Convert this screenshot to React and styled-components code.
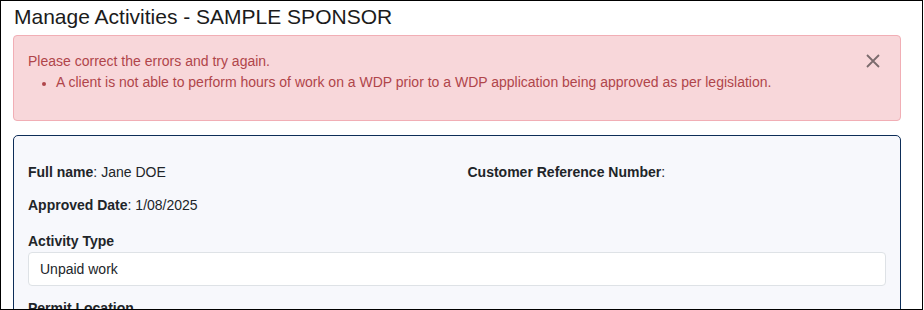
import React from "react";
import styled, { createGlobalStyle } from "styled-components";

const Global = createGlobalStyle`
  html, body { margin: 0; padding: 0; background: #fff; }
  body { font-family: "Liberation Sans", Arial, sans-serif; color: #212529; }
  * { box-sizing: border-box; }
`;

const Frame = styled.div`
  width: 923px;
  height: 310px;
  border: 1px solid #000;
  overflow: hidden;
  padding: 0 21px 0 12px;
  display: flex;
  flex-direction: column;
`;

const Title = styled.h1`
  margin: 3px 0 0 1px;
  font-size: 21px;
  font-weight: 400;
  line-height: 26px;
  color: #1b1b1b;
`;

const Alert = styled.div`
  margin-top: 5px;
  position: relative;
  background: #f8d7da;
  border: 1px solid #f1aeb5;
  border-radius: 4px;
  padding: 15px 14px 27px 14px;
  color: #b0454a;
  font-size: 14px;
  line-height: 21px;
`;

const AlertList = styled.ul`
  margin: 0;
  padding-left: 28px;
  li::marker { font-size: 12px; }
`;

const Close = styled.button`
  position: absolute;
  top: 17px;
  right: 19px;
  width: 16px;
  height: 16px;
  padding: 0;
  border: 0;
  background: transparent;
  cursor: pointer;
  display: flex;
  align-items: center;
  justify-content: center;
`;

const Card = styled.section`
  margin-top: 14px;
  background: #f7f8fc;
  border: 1px solid #0d2d58;
  border-radius: 5px;
  padding: 26px 14px 20px 14px;
  flex: 1;
`;

const InfoGrid = styled.div`
  display: grid;
  grid-template-columns: 1fr 1fr;
  column-gap: 21px;
  row-gap: 13px;
  font-size: 14px;
  line-height: 20px;
  color: #212529;
`;

const Field = styled.div`
  b { font-weight: 700; }
`;

const Label = styled.div`
  margin-top: ${(p) => p.$gap || 16}px;
  font-size: 14px;
  font-weight: 700;
  line-height: 20px;
`;

const Input = styled.div`
  margin-top: 1px;
  height: 34px;
  background: #fff;
  border: 1px solid #dee2e6;
  border-radius: 4px;
  padding: 0 11px;
  display: flex;
  align-items: center;
  font-size: 14px;
  color: #212529;
`;

export default function App() {
  return (
    <>
      <Global />
      <Frame>
        <Title>Manage Activities - SAMPLE SPONSOR</Title>
        <Alert role="alert">
          <div>Please correct the errors and try again.</div>
          <AlertList>
            <li>
              A client is not able to perform hours of work on a WDP prior to a WDP application being approved as per legislation.
            </li>
          </AlertList>
          <Close aria-label="Close">
            <svg width="14" height="14" viewBox="0 0 14 14">
              <path d="M1 1L13 13M13 1L1 13" stroke="#7b6b6d" strokeWidth="1.8" />
            </svg>
          </Close>
        </Alert>
        <Card>
          <InfoGrid>
            <Field><b>Full name</b>: Jane DOE</Field>
            <Field><b>Customer Reference Number</b>:</Field>
            <Field><b>Approved Date</b>: 1/08/2025</Field>
          </InfoGrid>
          <Label>Activity Type</Label>
          <Input>Unpaid work</Input>
          <Label $gap={12}>Permit Location</Label>
        </Card>
      </Frame>
    </>
  );
}
